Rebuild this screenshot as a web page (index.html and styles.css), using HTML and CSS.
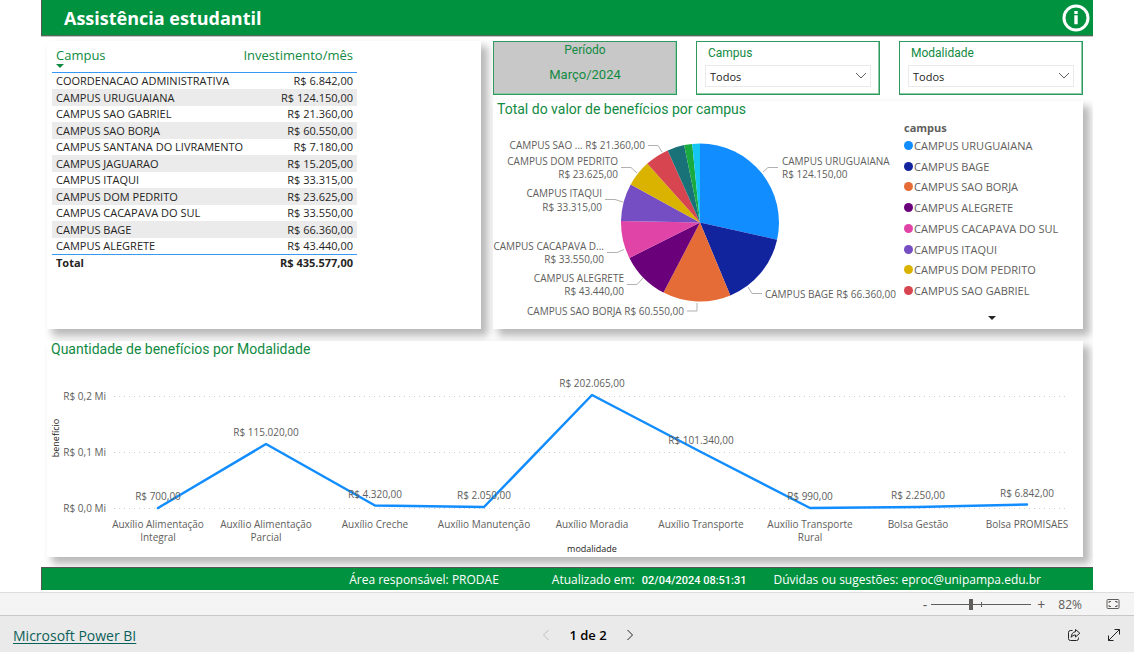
FILE: index.html
```html
<!DOCTYPE html>
<html lang="pt-BR">
<head>
<meta charset="utf-8">
<meta name="viewport" content="width=device-width, initial-scale=1">
<title>Assistência estudantil</title>
<link rel="stylesheet" href="styles.css">
</head>
<body>
<main class="report">
  <header class="report-header">
    <h1>Assistência estudantil</h1>
    <button class="info" type="button" aria-label="Informações">
      <svg viewBox="0 0 28 28" width="28" height="28" aria-hidden="true">
        <circle cx="14" cy="14" r="12" fill="none" stroke="#fff" stroke-width="3"/>
        <path d="M12.3 7h3.4v3h-3.4zM12.3 11.2h3.4v9h-3.4z" fill="#fff"/>
      </svg>
    </button>
  </header>

  <div class="board">
    <section class="panel table-panel">
      <table>
        <thead>
          <tr><th>Campus<span class="sort"></span></th><th>Investimento/mês</th></tr>
        </thead>
        <tbody>
          <tr><td>COORDENACAO ADMINISTRATIVA</td><td>R$ 6.842,00</td></tr>
          <tr><td>CAMPUS URUGUAIANA</td><td>R$ 124.150,00</td></tr>
          <tr><td>CAMPUS SAO GABRIEL</td><td>R$ 21.360,00</td></tr>
          <tr><td>CAMPUS SAO BORJA</td><td>R$ 60.550,00</td></tr>
          <tr><td>CAMPUS SANTANA DO LIVRAMENTO</td><td>R$ 7.180,00</td></tr>
          <tr><td>CAMPUS JAGUARAO</td><td>R$ 15.205,00</td></tr>
          <tr><td>CAMPUS ITAQUI</td><td>R$ 33.315,00</td></tr>
          <tr><td>CAMPUS DOM PEDRITO</td><td>R$ 23.625,00</td></tr>
          <tr><td>CAMPUS CACAPAVA DO SUL</td><td>R$ 33.550,00</td></tr>
          <tr><td>CAMPUS BAGE</td><td>R$ 66.360,00</td></tr>
          <tr><td>CAMPUS ALEGRETE</td><td>R$ 43.440,00</td></tr>
        </tbody>
        <tfoot>
          <tr><td>Total</td><td>R$ 435.577,00</td></tr>
        </tfoot>
      </table>
    </section>

    <div class="side">
      <div class="filters">
        <div class="period">
          <span class="period-label">Período</span>
          <span class="period-value">Março/2024</span>
        </div>
        <div class="filter">
          <label for="campus">Campus</label>
          <div class="drop">
            <select id="campus"><option>Todos</option></select>
            <svg viewBox="0 0 12 8" width="12" height="8" aria-hidden="true"><path d="M1 1l5 5 5-5"/></svg>
          </div>
        </div>
        <div class="filter">
          <label for="modalidade">Modalidade</label>
          <div class="drop">
            <select id="modalidade"><option>Todos</option></select>
            <svg viewBox="0 0 12 8" width="12" height="8" aria-hidden="true"><path d="M1 1l5 5 5-5"/></svg>
          </div>
        </div>
      </div>

      <section class="panel pie-panel">
        <h2>Total do valor de benefícios por campus</h2>
        <div class="pie-body">
          <svg class="chart pie" viewBox="493 120 400 209" role="img" aria-label="Total do valor de benefícios por campus">
            <path fill="#118DFF" d="M700 222.500V143.500A79 79 0 0 1 777.100 239.700Z"/>
            <path fill="#12239E" d="M700 222.500L777.100 239.700A79 79 0 0 1 730.300 295.500Z"/>
            <path fill="#E66C37" d="M700 222.500L730.300 295.500A79 79 0 0 1 663.500 292.600Z"/>
            <path fill="#6B007B" d="M700 222.500L663.500 292.600A79 79 0 0 1 629.400 257.900Z"/>
            <path fill="#E044A7" d="M700 222.500L629.400 257.900A79 79 0 0 1 621 220.900Z"/>
            <path fill="#744EC2" d="M700 222.500L621 220.900A79 79 0 0 1 630.700 184.600Z"/>
            <path fill="#D9B300" d="M700 222.500L630.700 184.600A79 79 0 0 1 647.300 163.600Z"/>
            <path fill="#D64550" d="M700 222.500L647.300 163.600A79 79 0 0 1 667.700 150.400Z"/>
            <path fill="#197278" d="M700 222.500L667.700 150.400A79 79 0 0 1 684.100 145.100Z"/>
            <path fill="#1AAB40" d="M700 222.500L684.100 145.100A79 79 0 0 1 692.200 143.900Z"/>
            <path fill="#15C6F4" d="M700 222.500L692.200 143.900A79 79 0 0 1 700 143.500Z"/>
            <g class="leaders">
              <path d="M763 172L768 167.500H778"/>
              <path d="M748 287L752 293.500H762"/>
              <path d="M697 303V311H687"/>
              <path d="M643 278L637 284.500H627"/>
              <path d="M624 249.500L617 252.500H607"/>
              <path d="M623 202L615 199.500H605"/>
              <path d="M637 173L631 167.500H621"/>
              <path d="M662 152L658 145.500H648"/>
            </g>
            <g class="labels">
              <text x="782" y="165">CAMPUS URUGUAIANA</text>
              <text x="782" y="178">R$ 124.150,00</text>
              <text x="765" y="298">CAMPUS BAGE R$ 66.360,00</text>
            </g>
            <g class="labels end">
              <text x="684" y="315">CAMPUS SAO BORJA R$ 60.550,00</text>
              <text x="624" y="282">CAMPUS ALEGRETE</text>
              <text x="624" y="295">R$ 43.440,00</text>
              <text x="604" y="250">CAMPUS CACAPAVA D...</text>
              <text x="604" y="263">R$ 33.550,00</text>
              <text x="602" y="197">CAMPUS ITAQUI</text>
              <text x="602" y="211">R$ 33.315,00</text>
              <text x="618" y="165">CAMPUS DOM PEDRITO</text>
              <text x="618" y="178">R$ 23.625,00</text>
              <text x="645" y="149">CAMPUS SAO ... R$ 21.360,00</text>
            </g>
          </svg>
          <div class="legend">
            <h3>campus</h3>
            <ul>
              <li class="c1">CAMPUS URUGUAIANA</li>
              <li class="c2">CAMPUS BAGE</li>
              <li class="c3">CAMPUS SAO BORJA</li>
              <li class="c4">CAMPUS ALEGRETE</li>
              <li class="c5">CAMPUS CACAPAVA DO SUL</li>
              <li class="c6">CAMPUS ITAQUI</li>
              <li class="c7">CAMPUS DOM PEDRITO</li>
              <li class="c8">CAMPUS SAO GABRIEL</li>
            </ul>
            <button class="more" type="button" aria-label="Mais itens"></button>
          </div>
        </div>
      </section>
    </div>

    <section class="panel line-panel">
      <h2>Quantidade de benefícios por Modalidade</h2>
      <svg class="chart" viewBox="47 360 1036 197" role="img" aria-label="Quantidade de benefícios por Modalidade">
        <g class="grid">
          <path d="M114 396.500H1068"/>
          <path d="M114 452.500H1068"/>
          <path d="M114 508.500H1068"/>
        </g>
        <polyline class="series" stroke-width="2.500" points="158,508 266,444 375,505.500 484,507 592,395 701,452 810,508 918,507 1027,504.500"/>
        <g class="labels end">
          <text x="106" y="400">R$ 0,2 Mi</text>
          <text x="106" y="456">R$ 0,1 Mi</text>
          <text x="106" y="512">R$ 0,0 Mi</text>
        </g>
        <g class="labels mid">
          <text x="158" y="500">R$ 700,00</text>
          <text x="266" y="436">R$ 115.020,00</text>
          <text x="375" y="498">R$ 4.320,00</text>
          <text x="484" y="499">R$ 2.050,00</text>
          <text x="592" y="387">R$ 202.065,00</text>
          <text x="701" y="444">R$ 101.340,00</text>
          <text x="810" y="500">R$ 990,00</text>
          <text x="918" y="499">R$ 2.250,00</text>
          <text x="1027" y="497">R$ 6.842,00</text>
          <text x="158" y="528">Auxílio Alimentação</text>
          <text x="158" y="541">Integral</text>
          <text x="266" y="528">Auxílio Alimentação</text>
          <text x="266" y="541">Parcial</text>
          <text x="375" y="528">Auxílio Creche</text>
          <text x="484" y="528">Auxílio Manutenção</text>
          <text x="592" y="528">Auxílio Moradia</text>
          <text x="701" y="528">Auxílio Transporte</text>
          <text x="810" y="528">Auxílio Transporte</text>
          <text x="810" y="541">Rural</text>
          <text x="918" y="528">Bolsa Gestão</text>
          <text x="1027" y="528">Bolsa PROMISAES</text>
        </g>
        <g class="axis">
          <text x="592" y="552">modalidade</text>
          <text transform="translate(59 438) rotate(-90)">benefício</text>
        </g>
      </svg>
    </section>
  </div>

  <footer class="report-footer">
    <span>Área responsável: PRODAE</span>
    <span class="updated">Atualizado em: <time>02/04/2024 08:51:31</time></span>
    <span>Dúvidas ou sugestões: eproc@unipampa.edu.br</span>
  </footer>
</main>

<div class="zoombar">
  <button type="button" aria-label="Reduzir">-</button>
  <input type="range" min="0" max="100" value="39" aria-label="Zoom">
  <button type="button" aria-label="Ampliar">+</button>
  <output>82%</output>
  <button class="fit" type="button" aria-label="Ajustar à página">
    <svg viewBox="0 0 14 12" width="14" height="12" aria-hidden="true"><rect x="1" y="1.500" width="12" height="9" rx="1"/><path d="M3 5V3.500H5M9 3.500H11V5M11 7V8.500H9M5 8.500H3V7"/></svg>
  </button>
</div>

<nav class="navbar">
  <a href="#">Microsoft Power BI</a>
  <div class="pager">
    <button type="button" aria-label="Página anterior" disabled><svg viewBox="0 0 8 12" width="8" height="12"><path d="M6.500 1L1.500 6l5 5"/></svg></button>
    <span>1 de 2</span>
    <button type="button" aria-label="Próxima página"><svg viewBox="0 0 8 12" width="8" height="12"><path d="M1.500 1l5 5-5 5"/></svg></button>
  </div>
  <div class="actions">
    <button type="button" aria-label="Compartilhar"><svg viewBox="0 0 14 14" width="14" height="14"><path d="M5.500 2.500H3.500A2 2 0 0 0 1.500 4.500V10.500A2 2 0 0 0 3.500 12.500H9.500A2 2 0 0 0 11.500 10.500V9.500M8.500 1.500L12.800 5.200L8.500 9V7C6.500 7 5.300 7.700 4.200 9.300C4.300 6.300 5.800 4 8.500 3.700Z"/></svg></button>
    <button type="button" aria-label="Tela inteira"><svg viewBox="0 0 14 14" width="14" height="14"><path d="M1.500 12.500L12.500 1.500M7.500 1.500H12.500V6.500M1.500 7.500V12.500H6.500"/></svg></button>
  </div>
</nav>
</body>
</html>
```
FILE: styles.css
```css
* { box-sizing: border-box; }

body {
  margin: 0;
  min-height: 100vh;
  display: flex;
  flex-direction: column;
  background: #fff;
  color: #252423;
  font-family: "Open Sans", "Noto Sans", sans-serif;
  font-size: 11px;
}

h1, h2, h3, ul { margin: 0; padding: 0; }
button { border: 0; padding: 0; background: none; font: inherit; color: inherit; }
button svg { display: block; }

.report {
  margin: 0 41px;
  padding-bottom: 2px;
  overflow: hidden;
}

.report-header {
  display: flex;
  align-items: center;
  justify-content: space-between;
  height: 36px;
  padding: 0 3px 0 22px;
  background: #00923f;
  border-left: 1px solid #555;
  border-bottom: 1px solid #4d6b58;
  box-shadow: 0 1px #c4c4c4;
  color: #fff;
}
.report-header h1 { font-size: 18px; font-weight: 700; }

.board {
  display: grid;
  grid-template-columns: 434fr 590fr;
  gap: 12px;
  padding: 5px 10px 10px 6px;
}

.panel {
  background: #fff;
  box-shadow: 6px 6px 8px 1px rgba(0, 0, 0, .28);
}

h2, label, .period {
  font-family: Roboto, sans-serif;
  color: #118a43;
}
h2 { padding: 0 0 2px 4px; font-size: 14px; font-weight: 400; line-height: 17px; }

.table-panel { padding: 5px; }
table { width: 305px; border-collapse: collapse; }
th {
  padding: 0 0 0 4px;
  border-bottom: 1px solid #3599f5;
  color: #118a43;
  font-size: 13px;
  font-weight: 400;
  line-height: 18px;
  text-align: left;
  vertical-align: top;
}
.sort {
  display: block;
  width: 8px;
  margin-bottom: 4px;
  border: 4px solid transparent;
  border-top-color: #118a43;
  border-bottom: 0;
}
td { height: 16px; padding: 0 0 0 4px; line-height: 16px; white-space: nowrap; }
tbody tr:nth-child(even) { background: #ebebeb; }
tbody tr:nth-child(even) td { height: 17px; }
th:last-child, td:last-child { padding-left: 0; padding-right: 4px; text-align: right; }
tfoot td { border-top: 1px solid #3599f5; font-weight: 700; }

.side { display: flex; flex-direction: column; gap: 6px; }
.filters {
  display: grid;
  grid-template-columns: repeat(3, 1fr);
  gap: 19px;
}
.filters > div { height: 54px; border: 1px solid #2f9a5d; box-shadow: inset -1px -1px #8fcaa7; }
.period { display: flex; flex-direction: column; align-items: center; gap: 8px; background: #c8c8c8; }
.period-label { font-size: 12px; line-height: 16px; }
.period-value { font-size: 13px; line-height: 18px; }
.filter { display: flex; flex-direction: column; gap: 4px; padding: 3px 8px 0; }
.filter label { padding-left: 3px; font-size: 12px; line-height: 16px; }
.drop { display: grid; align-items: center; }
.drop select, .drop svg { grid-area: 1 / 1; }
.drop select {
  appearance: none;
  width: 100%;
  height: 22px;
  padding: 0 4px;
  border: 1px solid #eaeaea;
  border-radius: 0;
  background: #fff;
  color: #252423;
  font: inherit;
}
.drop svg { justify-self: end; margin-right: 4px; pointer-events: none; fill: none; stroke: #605e5c; }

.pie-body { display: grid; grid-template-columns: 400fr 190fr; }
.chart { display: block; width: 100%; height: auto; overflow: visible; }
.leaders path, .grid path { fill: none; stroke: #b3b0ad; }
.labels { fill: #605e5c; font-size: 10px; }
.end { text-anchor: end; }
.mid, .axis { text-anchor: middle; }
.grid path { stroke: #d0d0d0; stroke-dasharray: 1 4; }
.series { fill: none; stroke: #118dff; stroke-linejoin: round; stroke-linecap: round; }
.axis { fill: #252423; font-size: 9px; }

.legend { padding-left: 11px; color: #605e5c; }
.legend h3 { font-size: 11px; font-weight: 700; line-height: 15px; }
.legend ul {
  display: flex;
  flex-direction: column;
  justify-content: space-around;
  height: 166px;
  list-style: none;
}
.legend li { display: flex; align-items: center; gap: 1px; white-space: nowrap; }
.legend li::before { content: ""; width: 9px; height: 9px; border-radius: 50%; background: currentColor; }
.legend .c1::before { background: #118dff; }
.legend .c2::before { background: #12239e; }
.legend .c3::before { background: #e66c37; }
.legend .c4::before { background: #6b007b; }
.legend .c5::before { background: #e044a7; }
.legend .c6::before { background: #744ec2; }
.legend .c7::before { background: #d9b300; }
.legend .c8::before { background: #d64550; }
.more {
  display: block;
  margin: 15px auto 0 84px;
  border: 4px solid transparent;
  border-top-color: #252423;
  border-bottom: 0;
}

.line-panel { grid-column: 1 / -1; }

.report-footer {
  display: flex;
  align-items: center;
  justify-content: flex-end;
  height: 23px;
  padding-right: 52px;
  border-top: 1px solid #555;
  border-left: 1px solid #555;
  background: #00923f;
  color: #fff;
  font-size: 12px;
  position: relative;
}
.updated { margin: 0 27px 0 53px; }
.updated time { margin-left: 4px; font-family: Roboto, sans-serif; font-size: 11px; font-weight: 500; }

.zoombar {
  display: flex;
  align-items: center;
  justify-content: flex-end;
  height: 24px;
  padding-right: 14px;
  border-top: 1px solid #dedede;
  border-bottom: 1px solid #c8c8c8;
  background: #f4f4f4;
  color: #605e5c;
  font-size: 12px;
}
.zoombar button { font-size: 14px; }
.zoombar input {
  appearance: none;
  width: 100px;
  height: 12px;
  margin: 0 6px 0 4px;
  background:
    linear-gradient(#605e5c, #605e5c) 50% 50% / 1px 5px no-repeat,
    linear-gradient(#605e5c, #605e5c) 50% 50% / 100% 1px no-repeat;
}
.zoombar input::-webkit-slider-thumb { appearance: none; width: 4px; height: 11px; background: #605e5c; }
.zoombar output { margin: 0 24px 0 13px; }
.zoombar svg { fill: none; stroke: #605e5c; }

.navbar {
  flex: 1;
  display: grid;
  grid-template-columns: 1fr auto 1fr;
  align-items: center;
  min-height: 36px;
  padding: 2px 13px 0;
  background: #eaeaea;
  color: #000;
  font-size: 14px;
}
.navbar a { color: #0b5f59; text-underline-offset: 2px; }
.navbar svg { fill: none; stroke: #252423; }
.pager { display: flex; align-items: center; gap: 19px; padding-left: 42px; }
.pager span { font-weight: 600; font-size: 13px; }
.pager :disabled svg { stroke: #bdbdbd; }
.actions { display: flex; justify-content: flex-end; gap: 26px; }
```
